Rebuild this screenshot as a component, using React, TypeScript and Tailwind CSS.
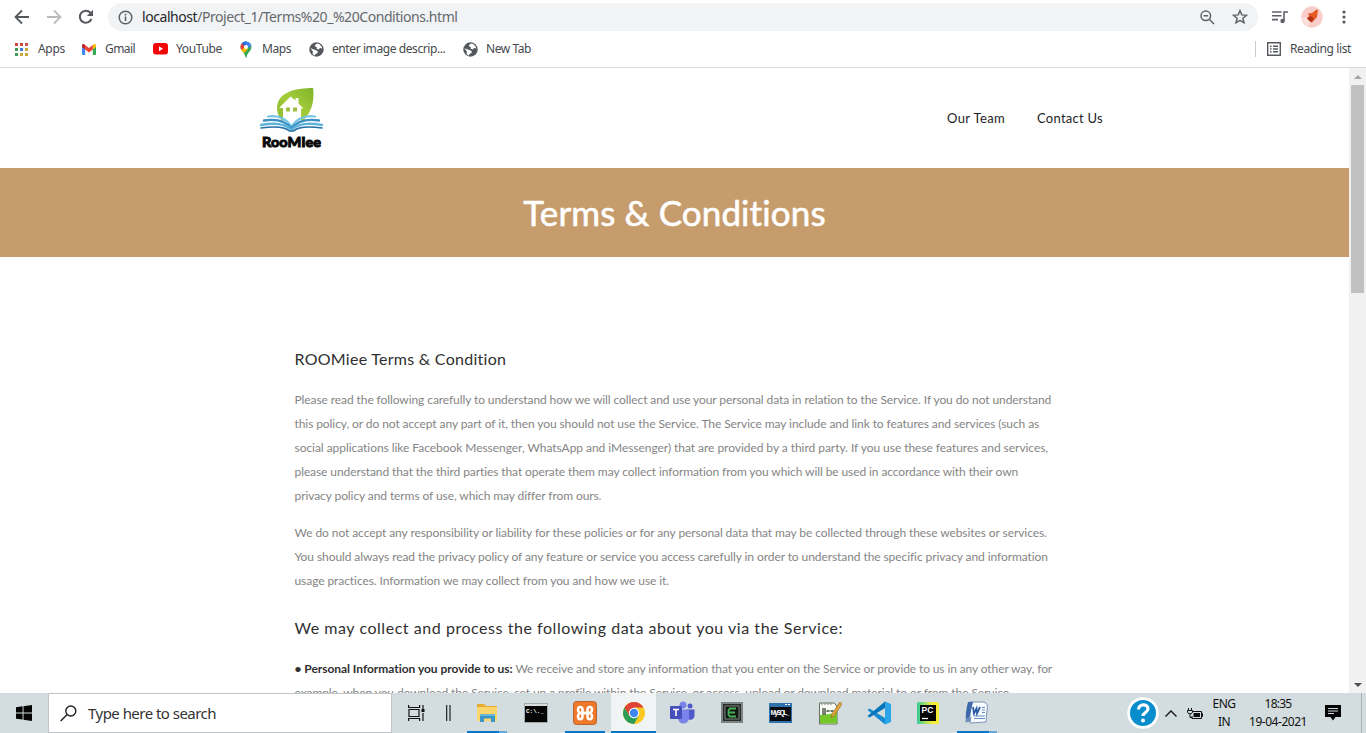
import type { ReactNode } from 'react';

const introLines = [
  { text: 'Please read the following carefully to understand how we will collect and use your personal data in relation to the Service. If you do not understand', track: 'tracking-[-0.088px]' },
  { text: 'this policy, or do not accept any part of it, then you should not use the Service. The Service may include and link to features and services (such as', track: 'tracking-[-0.083px]' },
  { text: 'social applications like Facebook Messenger, WhatsApp and iMessenger) that are provided by a third party. If you use these features and services,', track: 'tracking-[-0.048px]' },
  { text: 'please understand that the third parties that operate them may collect information from you which will be used in accordance with their own', track: 'tracking-[-0.091px]' },
  { text: 'privacy policy and terms of use, which may differ from ours.', track: 'tracking-[-0.088px]' },
];

const liabilityLines = [
  { text: 'We do not accept any responsibility or liability for these policies or for any personal data that may be collected through these websites or services.', track: 'tracking-[-0.08px]' },
  { text: 'You should always read the privacy policy of any feature or service you access carefully in order to understand the specific privacy and information', track: 'tracking-[-0.08px]' },
  { text: 'usage practices. Information we may collect from you and how we use it.', track: 'tracking-[-0.075px]' },
];

function Paragraph({ lines }: { lines: { text: string; track: string }[] }) {
  return (
    <p className="whitespace-nowrap text-[12px] leading-[24px] text-[#858585]">
      {lines.map((line) => (
        <span key={line.text} className={`block ${line.track}`}>{line.text}</span>
      ))}
    </p>
  );
}

function AppsIcon() {
  const colors = ['#d0453b', '#d0453b', '#c9544b', '#3d9a58', '#3b7fd0', '#c9a53b', '#3d9a58', '#c9a53b', '#c9a53b'];
  return (
    <svg width="13" height="13" viewBox="0 0 13 13">
      {colors.map((c, i) => (
        <rect key={i} x={(i % 3) * 5} y={Math.floor(i / 3) * 5} width="3" height="3" fill={c} />
      ))}
    </svg>
  );
}

function GmailIcon() {
  return (
    <svg width="14" height="11" viewBox="0 0 14 11">
      <path d="M0 1.5V10q0 1 1 1h2.2V4.6z" fill="#4285f4" />
      <path d="M14 1.5V10q0 1-1 1h-2.2V4.6z" fill="#34a853" />
      <path d="M10.8 1v4.5L14 3.1V1.3C14 0 12.5-.5 11.500.4z" fill="#fbbc04" />
      <path d="M3.200 1 7 3.900 10.800 1v4.500L7 8.400 3.200 5.500z" fill="#ea4335" />
      <path d="M0 1.300C0 0 1.500-.5 2.500.4L3.200 1v4.500L0 3.100z" fill="#c5221f" />
    </svg>
  );
}

function YouTubeIcon() {
  return (
    <svg width="15" height="12" viewBox="0 0 15 12">
      <rect width="15" height="11.500" rx="3" fill="#f00808" />
      <path d="M6 3.300v5l4-2.500z" fill="#fff" />
    </svg>
  );
}

function MapsIcon() {
  return (
    <svg className="ml-px" width="12" height="17" viewBox="0 0 12 17">
      <clipPath id="mapPin">
        <path d="M6 .5A5.500 5.500 0 0 0 .5 6c0 4 4 5 5 10.200q.5 1 1 0C7.500 11 11.500 10 11.500 6A5.500 5.500 0 0 0 6 .5z" />
      </clipPath>
      <g clipPath="url(#mapPin)">
        <path d="M0 0h12v17H0z" fill="#34a853" />
        <path d="M0 8 4 4l4 4-6 6H0z" fill="#fbbc04" />
        <path d="M3 0h9v4.500L8 7 5 4z" fill="#4285f4" />
        <path d="M0 0h5l1 4-4 5-2-2z" fill="#ea4335" />
        <path d="M2 0h5L5 5 1.500 2.500z" fill="#1a73e8" />
      </g>
      <circle cx="6" cy="6" r="2" fill="#fff" />
    </svg>
  );
}

function GlobeIcon() {
  return (
    <svg width="15" height="15" viewBox="0 0 15 15">
      <circle cx="7.500" cy="7.500" r="7.200" fill="#54575b" />
      <path d="M8 1.500 5.800 3.200l.4 1.400 1.600.3-.2 1.800 2.100.7 1.300-1.300 2.300.3-.7-2L10.300 2zM1.500 6.200l3.300 1.200 2.300.8 1.800 1.300-.6 1.800-2 .7-.3 1.700L3.500 12l.5-2.300z" fill="#fff" />
    </svg>
  );
}

function Bookmark({ icon, label, width, track }: { icon: ReactNode; label: string; width: string; track: string }) {
  return (
    <div className={`flex h-full shrink-0 items-center ${width}`}>
      <span className="flex w-[23px] items-center">{icon}</span>
      <span className={`whitespace-nowrap text-[12px] leading-4 ${track}`}>{label}</span>
    </div>
  );
}

function BrowserChrome() {
  return (
    <div className="h-[68px] shrink-0 border-b border-[#d9dbdd] bg-white font-['Noto_Sans',sans-serif] text-[#46494d]">
      <div className="flex h-[34px] items-center">
        <svg className="ml-[14px]" width="16" height="16" viewBox="0 0 16 16" fill="none" stroke="#55585c" strokeWidth="1.800">
          <path d="M15 8H2M8 1.500 1.500 8 8 14.500" />
        </svg>
        <svg className="ml-[17px]" width="16" height="16" viewBox="0 0 16 16" fill="none" stroke="#b9bbbd" strokeWidth="1.800">
          <path d="M0 8h13M7 1.500 13.500 8 7 14.500" />
        </svg>
        <svg className="ml-[15px]" width="16" height="16" viewBox="0 0 16 16">
          <path d="M13.400 10A6 6 0 1 1 12.300 3.700L14 5.500" fill="none" stroke="#55585c" strokeWidth="2" />
          <path d="M15 .8v6.200H8.800z" fill="#55585c" />
        </svg>
        <div className="ml-[14px] flex h-7 w-[1150px] items-center rounded-full bg-[#f1f3f4]">
          <svg className="ml-[10px]" width="15" height="15" viewBox="0 0 15 15">
            <circle cx="7.500" cy="7.500" r="6.300" fill="none" stroke="#5f6368" strokeWidth="1.500" />
            <path d="M7.500 6.500v4.500M7.500 3.700v1.700" stroke="#5f6368" strokeWidth="1.600" />
          </svg>
          <span className="ml-[9px] text-[14px] leading-5 tracking-[-0.44px] text-[#65696e]">
            <span className="text-[#242628]">localhost</span>/Project_1/Terms%20_%20Conditions.html
          </span>
          <svg className="ml-auto" width="15" height="15" viewBox="0 0 15 15" fill="none" stroke="#5f6368" strokeWidth="1.500">
            <circle cx="5.800" cy="5.800" r="4.800" />
            <path d="M3.500 5.800h4.600M9.300 9.300l4.700 4.700" />
          </svg>
          <svg className="ml-[17px] mr-[10px]" width="16" height="16" viewBox="0 0 16 16">
            <path d="m8 1.700 1.800 4.200 4.600.4-3.500 3 1.100 4.500L8 11.400l-4 2.400 1.100-4.500-3.500-3 4.600-.4z" fill="none" stroke="#5f6368" strokeWidth="1.500" />
          </svg>
        </div>
        <svg className="ml-[14px]" width="16" height="14" viewBox="0 0 16 14" fill="none" stroke="#5f6368" strokeWidth="1.600">
          <path d="M0 2h9.500M0 5.800h9.500M0 9.600h6M12 1.200v10M12 2h4" />
          <circle cx="10.500" cy="11" r="2.200" fill="#5f6368" stroke="none" />
        </svg>
        <svg className="ml-[13px]" width="22" height="22" viewBox="0 0 22 22">
          <circle cx="11" cy="11" r="10.700" fill="#f9cdca" />
          <path d="M1 12h5l3 5-2 3a11 11 0 0 1-6-8z" fill="#fbe0db" />
          <path d="m7 7.500 4-.5 4.500-3.500 1.500.8-1 6.700-5 5.500-5-3.500 2-3z" fill="#e65a24" />
          <path d="m6 12 4-2 3 3-3 3.500z" fill="#ad3418" />
        </svg>
        <svg className="ml-[19px]" width="4" height="14" viewBox="0 0 4 14" fill="#55585c">
          <circle cx="2" cy="2" r="1.600" /><circle cx="2" cy="7" r="1.600" /><circle cx="2" cy="12" r="1.600" />
        </svg>
      </div>
      <div className="flex h-[30px] items-center pl-[15px]">
        <Bookmark icon={<AppsIcon />} label="Apps" width="w-[67px]" track="tracking-[-0.297px]" />
        <Bookmark icon={<GmailIcon />} label="Gmail" width="w-[71px]" track="tracking-[-0.578px]" />
        <Bookmark icon={<YouTubeIcon />} label="YouTube" width="w-[86px]" track="tracking-[-0.359px]" />
        <Bookmark icon={<MapsIcon />} label="Maps" width="w-[70px]" track="tracking-[-0.438px]" />
        <Bookmark icon={<GlobeIcon />} label="enter image descrip..." width="w-[154px]" track="tracking-[-0.41px]" />
        <Bookmark icon={<GlobeIcon />} label="New Tab" width="w-[80px]" track="tracking-[-0.433px]" />
        <div className="ml-auto h-4 border-l border-[#c9cbcd]" />
        <svg className="ml-[11px]" width="14" height="14" viewBox="0 0 14 14" fill="none" stroke="#55585c" strokeWidth="1.400">
          <path d="M.7.7h12.600v12.600H.7zM3 4.200h1.500M3 7h1.500M3 9.800h1.500M6 4.200h5M6 7h5M6 9.800h5" />
        </svg>
        <span className="ml-[9px] mr-[15px] whitespace-nowrap text-[12px] leading-4 tracking-[-0.387px]">Reading list</span>
      </div>
    </div>
  );
}

function RoomieeLogo() {
  return (
    <svg width="66" height="64" viewBox="0 0 66 64">
      <defs>
        <linearGradient id="leaf" x1="1" y1="0" x2="0" y2="1">
          <stop offset="0" stopColor="#7db32b" />
          <stop offset=".5" stopColor="#a5cc38" />
          <stop offset="1" stopColor="#86b92e" />
        </linearGradient>
      </defs>
      <path d="M54 2C39 2 19 5 18 21c0 7 3 12 6 15h18C52 29 56 15 54 2z" fill="url(#leaf)" />
      <path d="M20 22 31.500 10.500l5 4V12h3v5.500l5 5H42v14l-9 6-9-6V22z" fill="#fff" />
      <path d="M27 21.500h4v4h-4zm7 0h4v4h-4z" fill="#a2bd46" />
      <g fill="none" strokeLinecap="round">
        <path d="M9 30.500q15-2 23.500 10Q41 28.500 56 30.500" stroke="#77c5e5" strokeWidth="2.200" />
        <path d="M5 34.500q19-3 27.500 8Q41 31.500 60 34.500" stroke="#3b8fc4" strokeWidth="2.400" />
        <path d="M2 39q22-4 30.500 5Q41 35 63 39" stroke="#5eb4db" strokeWidth="2.400" />
        <path d="M2 42q22-3 28.500 3h4q6.500-6 28.500-3" stroke="#246fa8" strokeWidth="1.600" />
      </g>
      <text x="3" y="61" textLength="59" lengthAdjust="spacingAndGlyphs" fontFamily="Lato, sans-serif" fontSize="14" fontWeight="900" fill="#080808" stroke="#080808" strokeWidth=".9">RooMIee</text>
    </svg>
  );
}

function Scrollbar() {
  return (
    <div className="flex w-[17px] shrink-0 flex-col items-center bg-[#f1f1f1]">
      <div className="flex h-[17px] items-center"><svg width="8" height="4" viewBox="0 0 8 4"><path d="M0 4 4 0l4 4z" fill="#a3a3a3" /></svg></div>
      <div className="h-[208px] w-[13px] bg-[#c1c1c1]" />
      <div className="mt-auto flex h-[17px] items-center"><svg width="8" height="4" viewBox="0 0 8 4"><path d="m0 0 4 4 4-4z" fill="#505050" /></svg></div>
    </div>
  );
}

function Page() {
  return (
    <main className="flex min-w-0 flex-1 flex-col overflow-hidden bg-white font-['Lato',sans-serif]">
      <header className="flex h-[100px] shrink-0 items-center pl-[259px] text-[13px] text-[#1d1d25]">
        <RoomieeLogo />
        <nav className="ml-auto mr-[246px] flex gap-[32px] pt-px">
          <a className="tracking-[0.367px]">Our Team</a>
          <a className="tracking-[0.27px]">Contact Us</a>
        </nav>
      </header>
      <div className="flex h-[89px] shrink-0 items-center justify-center bg-[#c69c6d] pb-px">
        <h1 className="text-[35px] leading-[48px] tracking-[0.116px] text-white [-webkit-text-stroke:0.6px_white]">Terms &amp; Conditions</h1>
      </div>
      <article className="pl-[294.5px] pt-[90px]">
        <h2 className="text-[16px] leading-6 tracking-[0.27px] text-[#303030]">ROOMiee Terms &amp; Condition</h2>
        <div className="mt-[17px]"><Paragraph lines={introLines} /></div>
        <div className="mt-[13px]"><Paragraph lines={liabilityLines} /></div>
        <h2 className="mt-[23px] text-[16px] leading-6 tracking-[0.545px] text-[#303030]">We may collect and process the following data about you via the Service:</h2>
        <p className="mt-[17px] whitespace-nowrap text-[12px] leading-[24px] text-[#858585]">
          <span className="block">
            <b className="tracking-[-0.04px] text-[#303030]">• Personal Information you provide to us:</b>
            <span className="tracking-[-0.108px]"> We receive and store any information that you enter on the Service or provide to us in any other way, for</span>
          </span>
          <span className="block tracking-[-0.087px]">example, when you download the Service, set up a profile within the Service, or access, upload or download material to or from the Service.</span>
        </p>
      </article>
    </main>
  );
}

function TaskItem({ children, state = 'idle' }: { children: ReactNode; state?: 'idle' | 'single' | 'stacked' | 'active' }) {
  return (
    <div className="flex h-full w-[49px] shrink-0 flex-col items-center">
      <div className={`flex w-[45px] flex-1 items-center justify-center pt-px ${state === 'active' ? 'bg-[#f0f4f5]' : ''}`}>{children}</div>
      {state === 'idle' && <div className="h-[2px]" />}
      {state === 'single' && <div className="h-[2px] w-10 bg-[#0877c9]" />}
      {state === 'active' && <div className="h-[2px] w-[45px] bg-[#0877c9]" />}
      {state === 'stacked' && (
        <div className="flex h-[2px] w-10"><div className="w-8 bg-[#0877c9]" /><div className="w-2 bg-[#68a9da]" /></div>
      )}
    </div>
  );
}

function ExplorerIcon() {
  return (
    <svg width="22" height="20" viewBox="0 0 22 20">
      <path d="M1 1h7l2 2h11v15H1z" fill="#e6ad35" />
      <path d="M1 4h20v14H1z" fill="#fbd66d" />
      <path d="M4 11h15v8h-4v-3.500H8V19H4z" fill="#3d96c8" />
      <path d="M4 11h15v2H4z" fill="#69b5d8" />
    </svg>
  );
}

function CommandIcon() {
  return (
    <svg width="24" height="20" viewBox="0 0 24 20">
      <rect x=".5" y=".5" width="23" height="19" fill="#050505" stroke="#a4a9aa" />
      <path d="M1 1h22v2H1z" fill="#d9dddd" />
      <text x="2" y="9.500" fontSize="6" fontFamily="Liberation Mono, monospace" fontWeight="700" fill="#fff">C:\._</text>
    </svg>
  );
}

function XamppIcon() {
  return (
    <svg width="24" height="24" viewBox="0 0 24 24">
      <rect x=".5" y=".5" width="23" height="23" rx="3" fill="#ee792b" stroke="#b96532" />
      <path d="M5 8.500C5 5 9.500 5 9.500 8.500v1.800q0 1.700 2.500 1.700t2.500-1.700V8.500C14.500 5 19 5 19 8.500c0 2-1 3-2.500 3.500 1.500.5 2.500 1.500 2.500 3.500 0 3.500-4.500 3.500-4.500 0v-1.800Q14.500 12 12 12t-2.500 1.700v1.800c0 3.500-4.500 3.500-4.500 0 0-2 1-3 2.500-3.500C6 11.500 5 10.500 5 8.500z" fill="none" stroke="#fff" strokeWidth="2.500" />
    </svg>
  );
}

function ChromeIcon() {
  return (
    <svg width="22" height="22" viewBox="0 0 22 22">
      <circle cx="11" cy="11" r="11" fill="#fbc924" />
      <path d="M1.500 5.500A11 11 0 0 1 20.500 5.500H11L6.200 13.800z" fill="#dd4437" />
      <path d="M1.500 5.500A11 11 0 0 0 11 22l4.800-8.200H6.200z" fill="#279d58" />
      <circle cx="11" cy="11" r="5.200" fill="#fff" />
      <circle cx="11" cy="11" r="4.200" fill="#4285ee" />
    </svg>
  );
}

function TeamsIcon() {
  return (
    <svg width="25" height="23" viewBox="0 0 25 23">
      <circle cx="20" cy="5" r="2.500" fill="#5059c9" />
      <path d="M16 8.500h8.500V15a4.300 4.300 0 0 1-8.500 0z" fill="#5059c9" />
      <circle cx="13" cy="4" r="3.500" fill="#7b83eb" />
      <path d="M8 8.500h11V17a5.500 5.500 0 0 1-11 0z" fill="#7b83eb" />
      <rect y="5" width="12" height="13" rx="1" fill="#464eb8" />
      <path d="M3 8.500h6M6 8.500v6.500" stroke="#fff" strokeWidth="1.600" />
    </svg>
  );
}

function CodeBlockIcon() {
  return (
    <svg width="22" height="21" viewBox="0 0 22 21">
      <rect x="1" y="1" width="20" height="19" fill="#292e2d" stroke="#7c8382" strokeWidth="2" />
      <path d="M4 4h14v13H4z" fill="#101713" stroke="#7a847e" />
      <path d="M15 6.500H9L7.500 8v5L9 14.500h6M8 10.500h6" fill="none" stroke="#46ad51" strokeWidth="1.800" />
    </svg>
  );
}

function MySqlIcon() {
  return (
    <svg width="23" height="20" viewBox="0 0 23 20">
      <path d="M0 0h23v20H0z" fill="#2e73ad" />
      <path d="M1 4h21v14H1z" fill="#080b10" />
      <path d="M16 1.500h2M19 1.500h2" stroke="#fff" />
      <text x="1.500" y="11.500" textLength="19" fontFamily="Liberation Sans, sans-serif" fontSize="6.500" fontWeight="700" fill="#fff">MySQL_</text>
    </svg>
  );
}

function NotepadIcon() {
  return (
    <svg width="24" height="24" viewBox="0 0 24 24">
      <path d="M1.500 2H16l3 3v18H1.500z" fill="#f7faf5" stroke="#687064" />
      <path d="M2 14q9 0 17-3v11.500H2z" fill="#75c829" />
      <path d="M4 2v2M7 2v2M10 2v2M13 2v2" stroke="#798074" />
      <path d="M5 14V7M7 14V7M8.500 10h3M12.500 10h3" stroke="#394834" strokeWidth="1.300" />
      <path d="m22 1-8 12-1 4 3-2L24 3z" fill="#e7a933" stroke="#8d6a2b" strokeWidth=".7" />
    </svg>
  );
}

function VsCodeIcon() {
  return (
    <svg width="24" height="24" viewBox="0 0 24 24">
      <path d="M2.500 7.500.5 9 18 23.500V17z" fill="#168bd0" />
      <path d="M2.500 16.500.5 15 18 .5V7z" fill="#0876bd" />
      <path d="M18 .5 24 3v18l-6 2.500z" fill="#2ba5e7" />
    </svg>
  );
}

function PyCharmIcon() {
  return (
    <svg width="22" height="22" viewBox="0 0 22 22">
      <defs><linearGradient id="pycharm"><stop stopColor="#32c99a" /><stop offset=".4" stopColor="#a8e363" /><stop offset=".7" stopColor="#f5ed39" /></linearGradient></defs>
      <rect width="22" height="22" rx="1.500" fill="url(#pycharm)" />
      <rect x="3" y="3" width="16" height="16" fill="#050505" />
      <text x="4.500" y="11" fontFamily="Liberation Sans, sans-serif" fontWeight="700" fontSize="8.500" fill="#fff">PC</text>
      <path d="M5 16.500h6" stroke="#fff" strokeWidth="1.300" />
    </svg>
  );
}

function WordIcon() {
  return (
    <svg width="23" height="23" viewBox="0 0 23 23">
      <path d="M5 1h14l3.500 3-1.500 17-16 1z" fill="#f7fafe" stroke="#7994b7" />
      <path d="M17 6.500h3M17 9h3M17 11.500h3M9 15h11M9 17.500h11" stroke="#668ec1" />
      <path d="m3 1 5 0-3 13q-1 5-4 7Q0 12 3 1z" fill="#3d68aa" />
      <path d="m8 6 1 6.500 2.500-5 .5 5L15 6" fill="none" stroke="#2e5ca5" strokeWidth="1.800" />
      <path d="m1 17-.5 4.500 5-1 1-4z" fill="#6d8ebb" />
    </svg>
  );
}

function Taskbar() {
  return (
    <div className="flex h-10 shrink-0 bg-[#d3dcde] font-['Noto_Sans',sans-serif] text-[#111]">
      <div className="flex w-12 shrink-0 items-center justify-center">
        <svg width="16" height="16" viewBox="0 0 16 16"><path d="m0 2.200 6.600-.9v6.200H0zm7.500-1L16 0v7.500H7.500zM0 8.400h6.600v6.200L0 13.700zm7.500 0H16V16l-8.500-1.200z" fill="#050505" /></svg>
      </div>
      <div className="flex w-[344px] shrink-0 items-center border border-[#bfc4c6] bg-white pl-[11px]">
        <svg width="17" height="17" viewBox="0 0 17 17" fill="none" stroke="#202020" strokeWidth="1.400"><circle cx="10.800" cy="6" r="5" /><path d="M7.200 9.500.7 16" /></svg>
        <span className="ml-[11px] whitespace-nowrap text-[15px] leading-5 tracking-[-0.53px] text-[#333]">Type here to search</span>
      </div>
      <div className="flex w-[48px] shrink-0 items-center justify-center">
        <svg width="17" height="16" viewBox="0 0 17 16" fill="none" stroke="#151515" strokeWidth="1.200"><path d="M.6 0v2.500h11V0M1 4.500h10v7H1zM.6 16v-2.500h11V16M15 0v4M15 8v8" /><path d="M13.500 4h3v3h-3z" fill="#111" stroke="none" /></svg>
      </div>
      <div className="flex w-[22px] shrink-0 items-center pl-[6px]">
        <svg width="5" height="16" viewBox="0 0 5 16"><path d="M.7 0v16M4 0v16" stroke="#111" strokeWidth="1.100" /></svg>
      </div>
      <TaskItem state="stacked"><ExplorerIcon /></TaskItem>
      <TaskItem><CommandIcon /></TaskItem>
      <TaskItem state="single"><XamppIcon /></TaskItem>
      <TaskItem state="active"><ChromeIcon /></TaskItem>
      <TaskItem><TeamsIcon /></TaskItem>
      <TaskItem><CodeBlockIcon /></TaskItem>
      <TaskItem><MySqlIcon /></TaskItem>
      <TaskItem><NotepadIcon /></TaskItem>
      <TaskItem><VsCodeIcon /></TaskItem>
      <TaskItem><PyCharmIcon /></TaskItem>
      <TaskItem state="stacked"><WordIcon /></TaskItem>
      <div className="ml-auto flex items-center">
        <svg width="32" height="32" viewBox="0 0 32 32">
          <circle cx="16" cy="16" r="15.800" fill="#fff" /><circle cx="16" cy="16" r="13" fill="#078ccc" />
          <path d="M11.500 12.500c0-6 9.500-6 9.500-.8 0 4-5 3.600-5 7.300" fill="none" stroke="#fff" strokeWidth="3.200" /><circle cx="16" cy="23.500" r="2" fill="#fff" />
        </svg>
        <svg className="ml-[6px]" width="12" height="7" viewBox="0 0 12 7"><path d="m.5 6.500 5.500-5.500 5.500 5.500" fill="none" stroke="#111" strokeWidth="1.300" /></svg>
        <svg className="ml-[10px]" width="16" height="11" viewBox="0 0 16 11" fill="none" stroke="#111"><path d="M6 3.500h8.500v7H5V8M14.500 5.500h1v3h-1M1.500 0v2M4.500 0v2M.5 2.500h5v2l-1.500 1.200H2L.5 4.500zM3 6v3.500h2" /><path d="M6.500 5H13v4H6.500z" fill="#111" stroke="none" /></svg>
        <div className="ml-[7px] flex w-[28px] flex-col items-center text-[12px] leading-[18px]"><span className="tracking-[-0.51px]">ENG</span><span className="tracking-[-0.6px]">IN</span></div>
        <div className="ml-[9px] flex w-[62px] flex-col items-center text-[12px] leading-[18px]"><span className="tracking-[-0.738px]">18:35</span><span className="tracking-[-0.464px]">19-04-2021</span></div>
        <svg className="ml-4" width="16" height="16" viewBox="0 0 16 16"><path d="M0 0h16v12h-5.500L8 15.500 5.500 12H0z" fill="#050505" /><path d="M3 3.500h10M3 6h10M3 8.500h6" stroke="#d3dcde" /></svg>
        <div className="ml-5 mr-1 h-10 border-l border-[#a8b0b2]" />
      </div>
    </div>
  );
}

export default function App() {
  return (
    <div className="flex h-[733px] w-[1366px] flex-col overflow-hidden">
      <BrowserChrome />
      <div className="flex min-h-0 flex-1"><Page /><Scrollbar /></div>
      <Taskbar />
    </div>
  );
}
